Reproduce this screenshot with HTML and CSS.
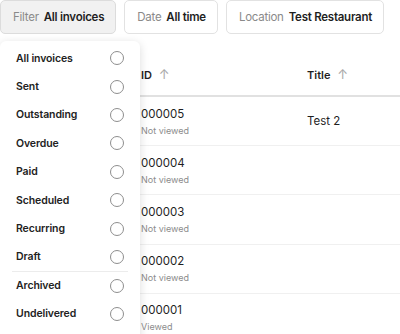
FILE: index.html
```html
<!DOCTYPE html>
<html lang="en">
<head>
  <meta charset="UTF-8" />
  <title>Invoices</title>
  <link rel="stylesheet" href="styles.css">
</head>
<body>
  <div class="page">
    <div class="filters">
      <button class="chip chip-active"><span class="chip-label">Filter</span><span class="chip-value">All invoices</span></button>
      <button class="chip"><span class="chip-label">Date</span><span class="chip-value">All time</span></button>
      <button class="chip"><span class="chip-label">Location</span><span class="chip-value">Test Restaurant</span></button>
    </div>

    <table class="invoices">
      <thead>
        <tr>
          <th class="col-id">ID <span class="sort">&#8593;</span></th>
          <th class="col-title">Title <span class="sort">&#8593;</span></th>
        </tr>
      </thead>
      <tbody>
        <tr>
          <td class="col-id"><div class="num">000005</div><div class="sub">Not viewed</div></td>
          <td class="col-title">Test 2</td>
        </tr>
        <tr>
          <td class="col-id"><div class="num">000004</div><div class="sub">Not viewed</div></td>
          <td class="col-title"></td>
        </tr>
        <tr>
          <td class="col-id"><div class="num">000003</div><div class="sub">Not viewed</div></td>
          <td class="col-title"></td>
        </tr>
        <tr>
          <td class="col-id"><div class="num">000002</div><div class="sub">Not viewed</div></td>
          <td class="col-title"></td>
        </tr>
        <tr>
          <td class="col-id"><div class="num">000001</div><div class="sub">Viewed</div></td>
          <td class="col-title"></td>
        </tr>
      </tbody>
    </table>

    <!-- filter dropdown -->
    <div class="menu">
      <label class="menu-item">All invoices <span class="radio"></span></label>
      <label class="menu-item">Sent <span class="radio"></span></label>
      <label class="menu-item">Outstanding <span class="radio"></span></label>
      <label class="menu-item">Overdue <span class="radio"></span></label>
      <label class="menu-item">Paid <span class="radio"></span></label>
      <label class="menu-item">Scheduled <span class="radio"></span></label>
      <label class="menu-item">Recurring <span class="radio"></span></label>
      <label class="menu-item">Draft <span class="radio"></span></label>
      <label class="menu-item menu-sep">Archived <span class="radio"></span></label>
      <label class="menu-item">Undelivered <span class="radio"></span></label>
    </div>
  </div>
</body>
</html>
```

FILE: styles.css
```css
/* ---------- base ---------- */
body {
  margin: 0;
  font-family: "Inter", "Noto Sans", sans-serif;
  color: #1f1f1f;
  background: #fff;
  overflow: hidden;
}
.page {
  position: relative;
  height: 334px;
  overflow: hidden;
}

/* ---------- filter chips ---------- */
.filters {
  display: flex;
  gap: 8px;
  height: 34px;
}
.chip {
  display: flex;
  flex-shrink: 0;
  align-items: center;
  gap: 5px;
  height: 34px;
  padding: 0 11px 0 12px;
  background: #fff;
  border: 1px solid #e2e2e2;
  border-radius: 5px;
  font-family: inherit;
  font-size: 11.5px;
  letter-spacing: -0.25px;
  white-space: nowrap;
  cursor: pointer;
}
.chip-active {
  background: #f1f1f1;
  border-color: #dcdcdc;
}
.chip-label {
  color: #8a8a8a;
}
.chip-value {
  font-weight: 600;
  color: #1f1f1f;
}

/* ---------- table ---------- */
.invoices {
  width: 100%;
  margin-top: 19px;
  border-collapse: collapse;
}
.invoices th {
  height: 42px;
  padding: 0;
  text-align: left;
  font-size: 11px;
  font-weight: 600;
  border-bottom: 2px solid #e1e1e1;
}
.invoices td {
  height: 48.2px;
  padding: 0;
  font-size: 11.5px;
  border-bottom: 1px solid #f0f0f0;
  vertical-align: middle;
}
.invoices .col-id {
  padding-left: 141px;
  width: 166px;
}
.sort {
  color: #a9a9a9;
  font-weight: 400;
  font-size: 13px;
  margin-left: 4px;
}
.num {
  font-size: 11.5px;
}
.sub {
  font-size: 9px;
  color: #8c8c8c;
  margin-top: 4px;
}

/* ---------- dropdown ---------- */
.menu {
  position: absolute;
  top: 41px;
  left: 0;
  width: 140px;
  height: 310px;
  padding-top: 3px;
  background: #fff;
  border-radius: 6px;
  box-shadow: 0 2px 10px rgba(0, 0, 0, 0.14);
}
.menu-item {
  display: flex;
  align-items: center;
  justify-content: space-between;
  height: 28.4px;
  margin: 0 12px;
  padding: 0 4px;
  box-sizing: border-box;
  font-size: 10.5px;
  font-weight: 600;
  letter-spacing: -0.1px;
  color: #222;
  cursor: pointer;
}
.menu-sep {
  border-top: 1px solid #ececec;
}
.radio {
  width: 14px;
  height: 14px;
  border: 1.3px solid #8e8e8e;
  border-radius: 50%;
  box-sizing: border-box;
}
```
